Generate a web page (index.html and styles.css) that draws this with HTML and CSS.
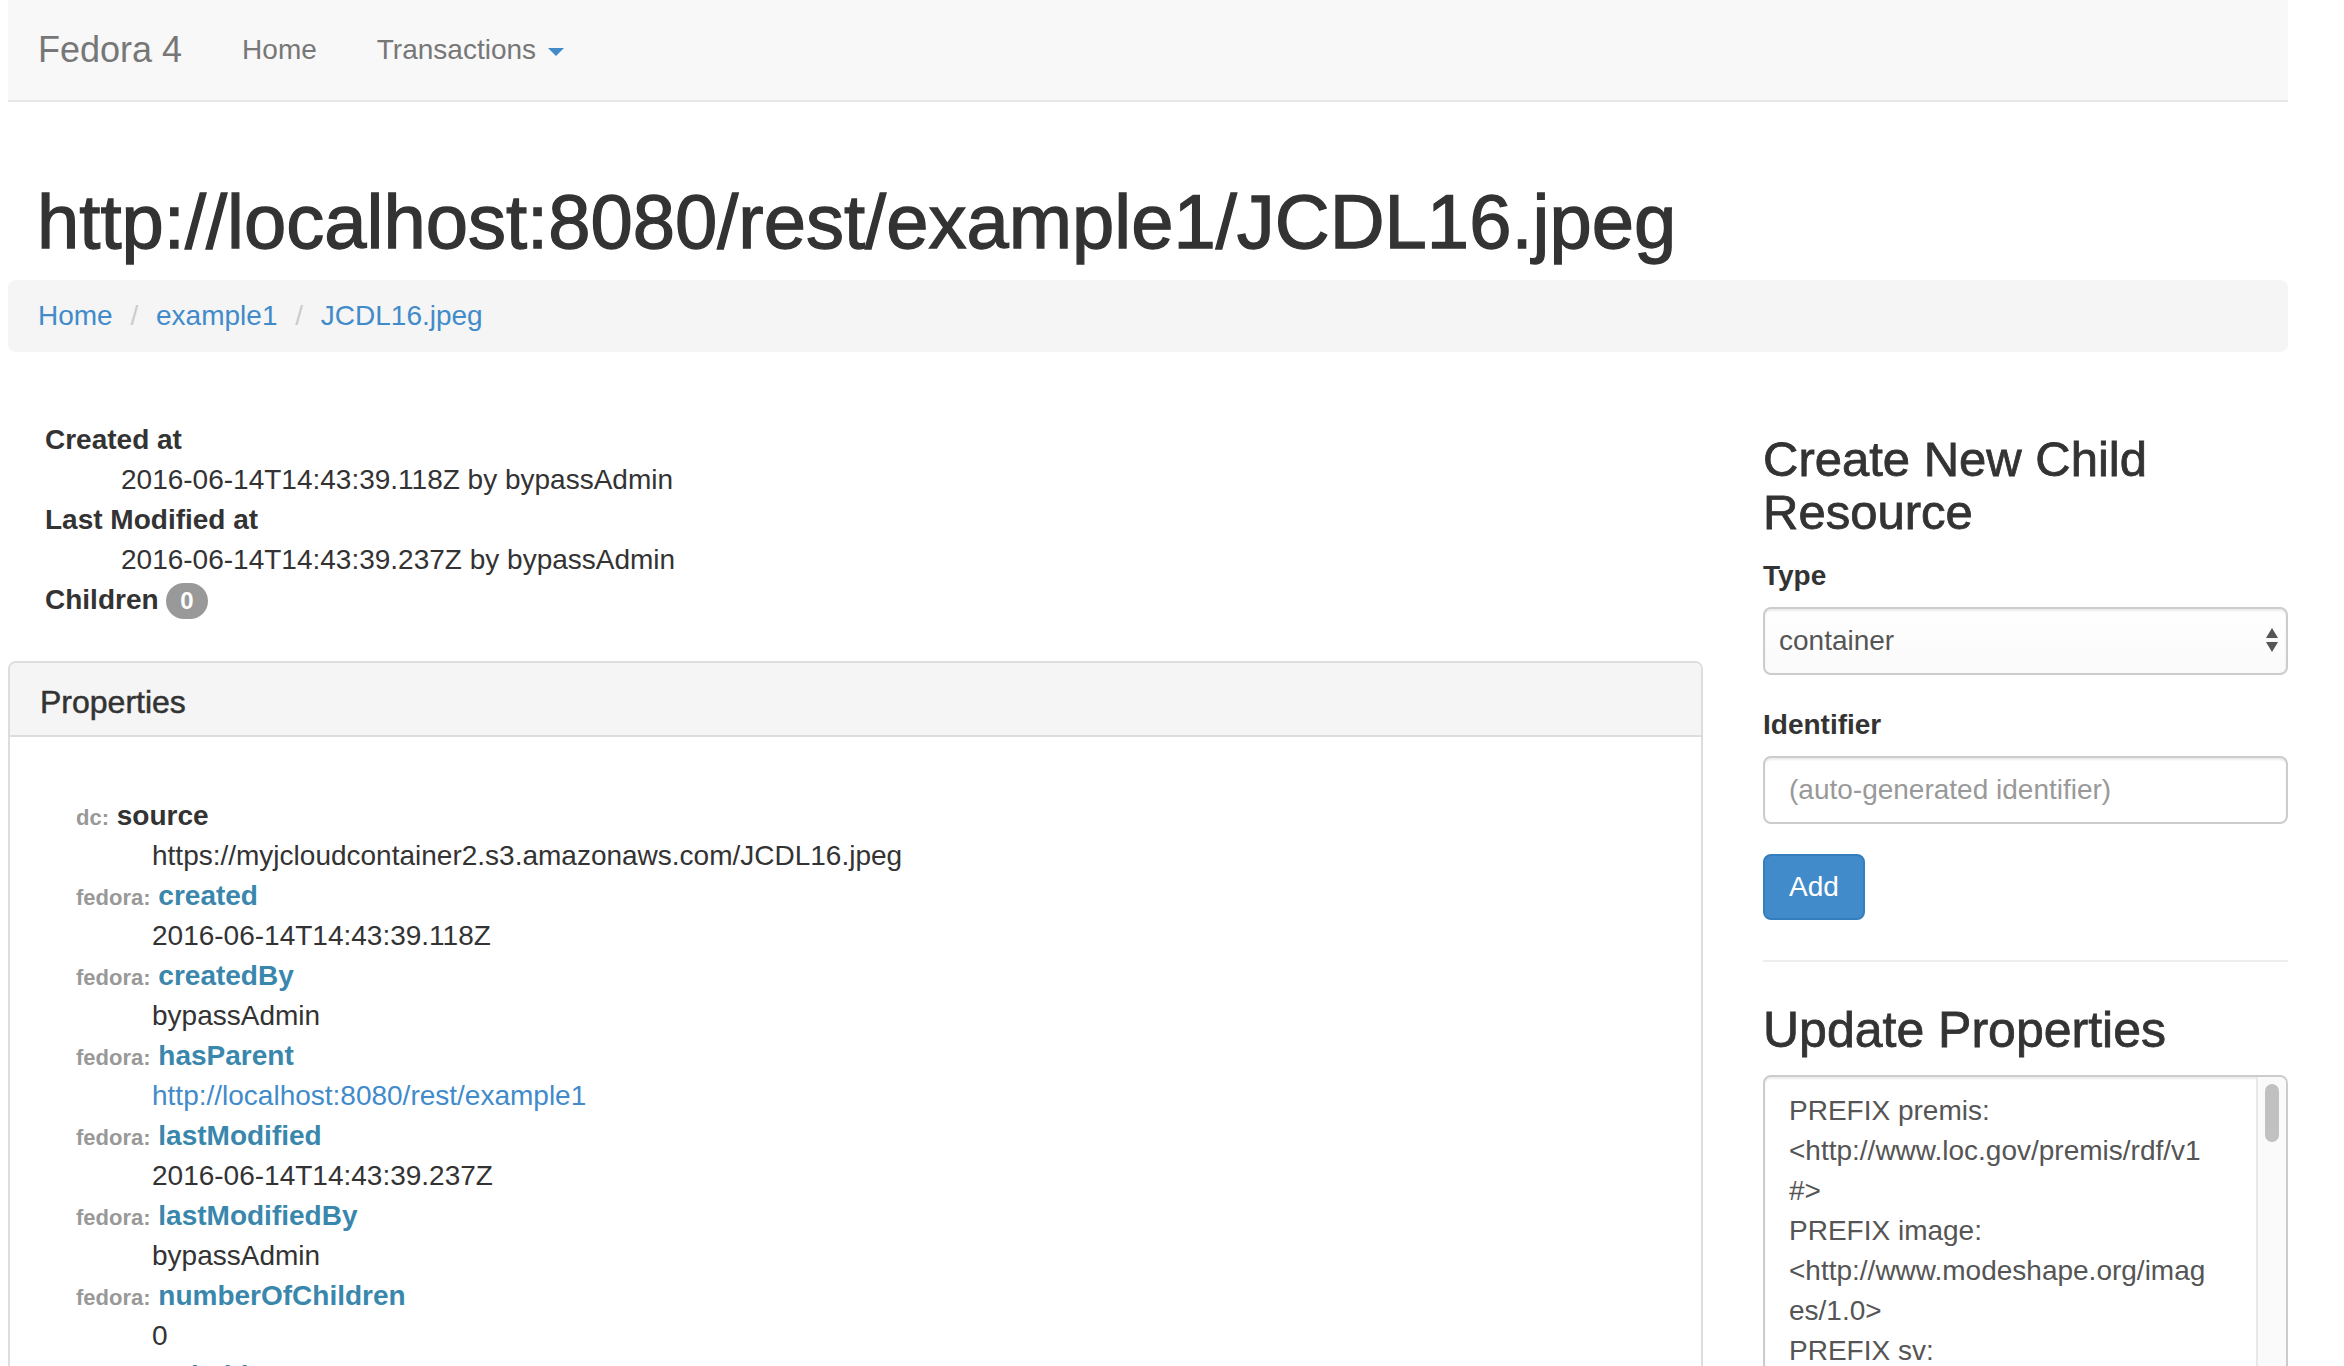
FILE: index.html
```html
<!DOCTYPE html>
<html lang="en">
<head>
<meta charset="utf-8">
<title>Fedora 4 - JCDL16.jpeg</title>
<link rel="stylesheet" href="styles.css">
</head>
<body>
<div class="page">
  <nav class="navbar">
    <a class="brand" href="#">Fedora 4</a>
    <ul class="nav">
      <li><a href="#">Home</a></li>
      <li><a href="#">Transactions <span class="caret"></span></a></li>
    </ul>
  </nav>

  <h1 class="title">http://localhost:8080/rest/example1/JCDL16.jpeg</h1>

  <ol class="breadcrumb">
    <li><a href="#">Home</a></li>
    <li><a href="#">example1</a></li>
    <li><a href="#">JCDL16.jpeg</a></li>
  </ol>

  <div class="row">
    <div class="main">
      <dl class="meta">
        <dt>Created at</dt>
        <dd>2016-06-14T14:43:39.118Z by bypassAdmin</dd>
        <dt>Last Modified at</dt>
        <dd>2016-06-14T14:43:39.237Z by bypassAdmin</dd>
        <dt>Children <span class="badge">0</span></dt>
      </dl>

      <div class="panel">
        <div class="panel-heading">Properties</div>
        <div class="panel-body">
          <dl class="props">
            <dt><span class="ns">dc:</span> <span class="pred plain">source</span></dt>
            <dd>https://myjcloudcontainer2.s3.amazonaws.com/JCDL16.jpeg</dd>
            <dt><span class="ns">fedora:</span> <a class="pred" href="#">created</a></dt>
            <dd>2016-06-14T14:43:39.118Z</dd>
            <dt><span class="ns">fedora:</span> <a class="pred" href="#">createdBy</a></dt>
            <dd>bypassAdmin</dd>
            <dt><span class="ns">fedora:</span> <a class="pred" href="#">hasParent</a></dt>
            <dd><a class="link" href="#">http://localhost:8080/rest/example1</a></dd>
            <dt><span class="ns">fedora:</span> <a class="pred" href="#">lastModified</a></dt>
            <dd>2016-06-14T14:43:39.237Z</dd>
            <dt><span class="ns">fedora:</span> <a class="pred" href="#">lastModifiedBy</a></dt>
            <dd>bypassAdmin</dd>
            <dt><span class="ns">fedora:</span> <a class="pred" href="#">numberOfChildren</a></dt>
            <dd>0</dd>
            <dt><span class="ns">fedora:</span> <a class="pred" href="#">writable</a></dt>
            <dd>true</dd>
          </dl>
        </div>
      </div>
    </div>

    <aside class="side">
      <h3 class="side-title first">Create New Child Resource</h3>
      <div class="form-group">
        <label class="label">Type</label>
        <div class="select-wrap">
          <select class="control select">
            <option>container</option>
            <option>binary</option>
          </select>
          <svg class="select-arrows" width="12" height="26" viewBox="0 0 12 26"><path d="M6 0 L12 10 L0 10 Z M0 14 L12 14 L6 24 Z" fill="#555"/></svg>
        </div>
      </div>
      <div class="form-group">
        <label class="label">Identifier</label>
        <input class="control" type="text" placeholder="(auto-generated identifier)">
      </div>
      <button class="btn" type="button">Add</button>
      <hr class="divider">
      <h3 class="side-title second">Update Properties</h3>
      <div class="textarea">
        <div class="textarea-text">PREFIX premis:
&lt;http://www.loc.gov/premis/rdf/v1
#&gt;
PREFIX image:
&lt;http://www.modeshape.org/imag
es/1.0&gt;
PREFIX sv:
&lt;http://www.jcp.org/jcr/sv/1.0&gt;
PREFIX test:</div>
        <div class="scrolltrack"><div class="scrollthumb"></div></div>
      </div>
    </aside>
  </div>
</div>
</body>
</html>
```

FILE: styles.css
```css
* { box-sizing: border-box; }

html, body {
  margin: 0;
  padding: 0;
  background: #fff;
}

body {
  font-family: "Liberation Sans", Arial, Helvetica, sans-serif;
  font-size: 28px;
  line-height: 40px;
  color: #333;
  overflow: hidden;
}

a { text-decoration: none; }

.page {
  width: 2280px;
  margin-left: 8px;
}

/* navbar */
.navbar {
  display: flex;
  align-items: center;
  height: 102px;
  background: #f8f8f8;
  border-bottom: 2px solid #e7e7e7;
}

.brand {
  padding: 0 30px;
  font-size: 36px;
  line-height: 40px;
  color: #777;
}

.nav {
  display: flex;
  list-style: none;
  margin: 0;
  padding: 0;
}

.nav a {
  display: block;
  padding: 0 30px;
  line-height: 40px;
  color: #777;
}

.caret {
  display: inline-block;
  width: 0;
  height: 0;
  margin-left: 4px;
  vertical-align: middle;
  border-top: 8px solid #428bca;
  border-left: 8px solid transparent;
  border-right: 8px solid transparent;
}

/* title */
.title {
  margin: 78px 0 16px 29px;
  font-size: 76px;
  line-height: 84px;
  font-weight: 500;
  color: #333;
  -webkit-text-stroke: 1.3px #333;
}

/* breadcrumb */
.breadcrumb {
  margin: 0 0 40px 0;
  padding: 16px 30px;
  list-style: none;
  background: #f5f5f5;
  border-radius: 8px;
  line-height: 40px;
}

.breadcrumb li {
  display: inline-block;
}

.breadcrumb li + li::before {
  content: "/\00a0";
  padding: 0 10px;
  color: #ccc;
}

.breadcrumb a { color: #428bca; }

/* layout */
.row {
  display: grid;
  grid-template-columns: 1695px 525px;
  column-gap: 60px;
  align-items: start;
}

/* meta list */
.meta {
  margin: 0 0 41px 0;
  padding: 28px 0 0 37px;
}

.meta dt {
  font-weight: bold;
}

.meta dd {
  margin: 0 0 0 76px;
}

.badge {
  display: inline-block;
  padding: 6px 14px;
  font-size: 24px;
  font-weight: bold;
  line-height: 1;
  color: #fff;
  background: #999;
  border-radius: 20px;
  vertical-align: baseline;
}

/* panel */
.panel {
  border: 2px solid #ddd;
  border-radius: 8px;
  min-height: 800px;
}

.panel-heading {
  padding: 21px 30px 15px;
  font-size: 32px;
  line-height: 36px;
  background: #f5f5f5;
  border-bottom: 2px solid #ddd;
  border-radius: 6px 6px 0 0;
  -webkit-text-stroke: 0.5px #333;
}

.panel-body {
  padding: 30px;
}

.props {
  margin: 29px 0 0 0;
  padding-left: 36px;
}

.props dt {
  font-weight: bold;
  line-height: 40px;
}

.props dd {
  margin: 0 0 0 76px;
  line-height: 40px;
}

.ns {
  font-size: 22px;
  line-height: 20px;
  color: #999;
}

.pred { color: #3a87ad; }
.pred.plain { color: #333; }

.link { color: #428bca; }

/* side column */
.side-title {
  font-size: 49px;
  line-height: 53px;
  font-weight: 500;
  margin: 41px 0 17px 0;
  color: #333;
  -webkit-text-stroke: 0.8px #333;
}

.side-title.second {
  font-size: 50px;
}

.form-group {
  margin-bottom: 30px;
}

.label {
  display: block;
  font-weight: bold;
  margin-bottom: 11px;
}

.control {
  display: block;
  width: 100%;
  height: 68px;
  padding: 12px 24px;
  font-family: inherit;
  font-size: 28px;
  line-height: 40px;
  color: #555;
  background: #fff;
  border: 2px solid #ccc;
  border-radius: 8px;
  box-shadow: inset 0 2px 2px rgba(0,0,0,0.075);
  outline: none;
}

.control::placeholder { color: #999; }

.select-wrap {
  position: relative;
}

.select {
  -webkit-appearance: none;
  appearance: none;
  padding-left: 14px;
  background: linear-gradient(#fff, #fafafa);
}

.select-arrows {
  position: absolute;
  right: 10px;
  top: 21px;
  pointer-events: none;
}

.btn {
  display: inline-block;
  padding: 11px 24px;
  font-family: inherit;
  font-size: 28px;
  line-height: 40px;
  color: #fff;
  background: #428bca;
  border: 2px solid #357ebd;
  border-radius: 8px;
}

.divider {
  margin: 40px 0 0 0;
  border: 0;
  border-top: 2px solid #eee;
  height: 0;
}

.divider + .side-title { margin-top: 42px; margin-bottom: 18px; }

.textarea {
  display: flex;
  height: 500px;
  border: 2px solid #ccc;
  border-radius: 8px;
  box-shadow: inset 0 2px 2px rgba(0,0,0,0.075);
  overflow: hidden;
}

.textarea-text {
  flex: 1;
  padding: 14px 24px;
  white-space: pre;
  color: #555;
  font-size: 28px;
  line-height: 40px;
  overflow: hidden;
}

.scrolltrack {
  width: 30px;
  flex: none;
  background: #fafafa;
  border-left: 2px solid #e8e8e8;
  padding: 7px 0 0 7px;
}

.scrollthumb {
  width: 14px;
  height: 58px;
  border-radius: 7px;
  background: #c1c1c1;
}
```
